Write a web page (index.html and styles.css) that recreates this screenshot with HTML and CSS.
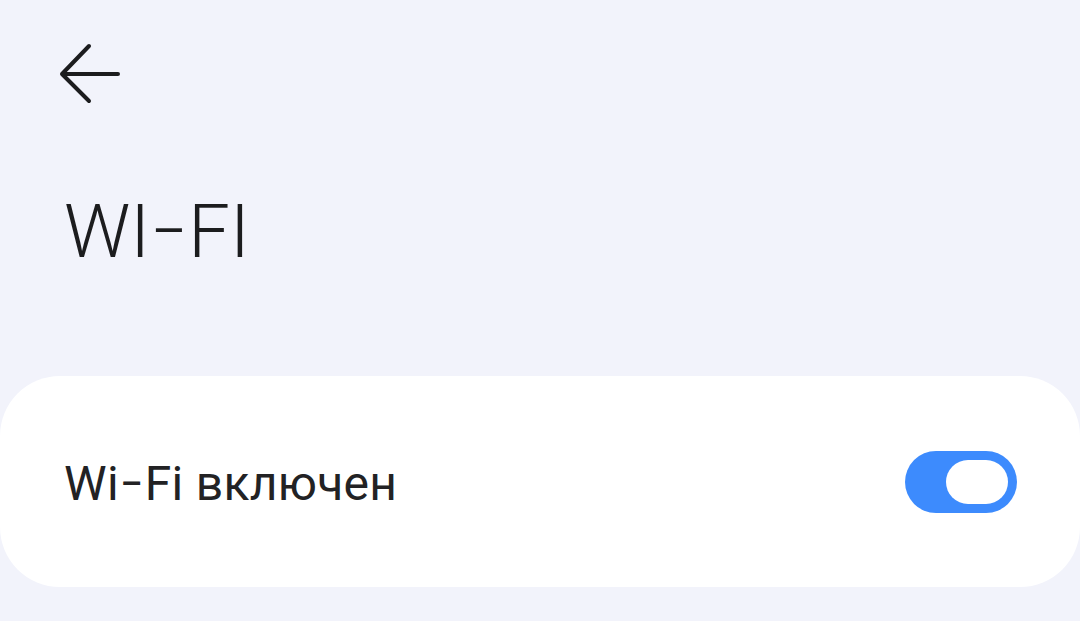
FILE: index.html
```html
<!DOCTYPE html>
<html lang="ru">
<head>
<meta charset="utf-8">
<link rel="stylesheet" href="styles.css">
</head>
<body>
<div class="page">
  <header class="topbar">
    <button class="back" aria-label="Назад">
      <svg width="64" height="64" viewBox="0 0 64 64"><path d="M31 5 L4 33 L31 60 M4 33 H60" fill="none" stroke="#1c1c1e" stroke-width="4" stroke-linecap="round" stroke-linejoin="round"/></svg>
    </button>
  </header>
  <h1 class="title">WI<span class="dash">–</span>FI</h1>
  <section class="card">
    <div class="row">
      <span class="label">Wi<span class="dash">–</span>Fi включен</span>
      <div class="switch on"><div class="thumb"></div></div>
    </div>
  </section>
</div>
</body>
</html>
```

FILE: styles.css
```css
html, body {
  margin: 0;
  padding: 0;
  background: #f2f3fb;
}
body {
  font-family: Roboto, "Noto Sans", sans-serif;
  color: #1c1c1e;
  width: 1080px;
  height: 621px;
  overflow: hidden;
}
.page {
  display: flex;
  flex-direction: column;
}
.topbar {
  height: 110px;
  display: flex;
  align-items: flex-start;
  padding: 41px 0 0 58px;
  box-sizing: border-box;
}
.back {
  border: 0;
  background: none;
  padding: 0;
  width: 64px;
  height: 64px;
  display: block;
}
.back svg { display: block; }
.title {
  margin: 0;
  padding: 85px 0 0 64px;
  font-weight: 300;
  font-size: 74px;
  line-height: 1;
  height: 188px;
  box-sizing: border-box;
}
.dash {
  display: inline-block;
  transform: scaleX(0.72);
  margin: 0 -5px;
}
.card {
  margin-top: 78px;
  background: #ffffff;
  border-radius: 60px;
  height: 211px;
  display: flex;
  align-items: center;
}
.row {
  flex: 1;
  display: flex;
  align-items: center;
  justify-content: space-between;
  padding: 0 63px 0 64px;
}
.label {
  font-size: 48px;
  font-weight: 400;
  color: #222224;
  letter-spacing: 0.3px;
  padding-top: 4px;
}
.label .dash {
  margin: 0 -3px;
}
.switch {
  width: 112px;
  height: 62px;
  border-radius: 31px;
  background: #3d8bfd;
  display: flex;
  align-items: center;
  justify-content: flex-end;
  padding: 0 9px;
  box-sizing: border-box;
}
.thumb {
  width: 62px;
  height: 44px;
  border-radius: 22px;
  background: #ffffff;
}
```
